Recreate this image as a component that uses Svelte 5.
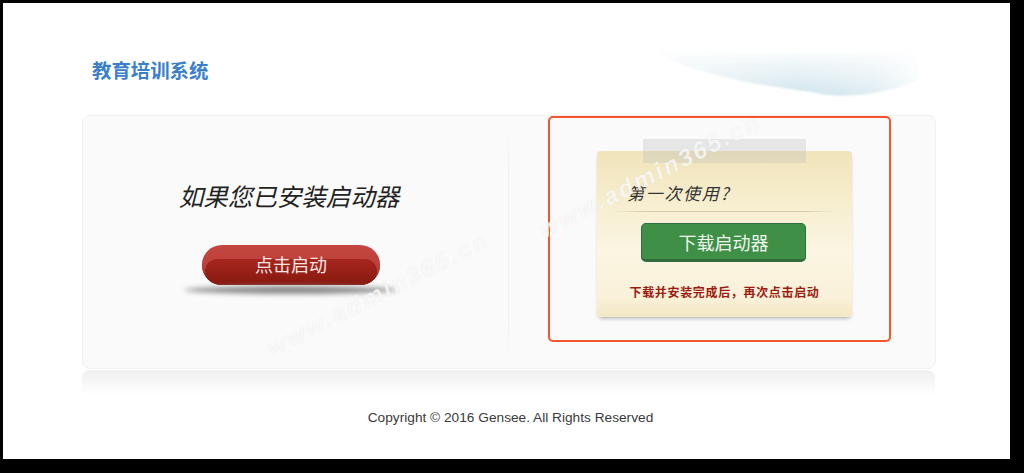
<script>
  // static launcher page, nothing interactive
  const title = '教育培训系统'
  const watermark = 'www.admin365.cn'
</script>

<div class="screen">
  <div class="window">

    <!-- header + swoosh -->
    <header class="top">
      <h1>{title}</h1>
      <svg class="swoosh" viewBox="0 0 300 70" aria-hidden="true">
        <defs>
          <filter id="soft" x="-20%" y="-40%" width="140%" height="180%">
            <feGaussianBlur stdDeviation="1.2" />
          </filter>
          <linearGradient id="wave" gradientUnits="userSpaceOnUse" x1="0" x2="0" y1="8" y2="54">
            <stop offset="0" stop-color="#d4e6ee" stop-opacity="0" />
            <stop offset="0.6" stop-color="#dcebf1" stop-opacity="0.8" />
            <stop offset="1" stop-color="#cfe3ec" />
          </linearGradient>
          <linearGradient id="fade" x1="0" x2="1" y1="0" y2="0">
            <stop offset="0" stop-color="#fff" stop-opacity="0.35" />
            <stop offset="0.55" stop-color="#fff" />
            <stop offset="0.8" stop-color="#fff" stop-opacity="0.7" />
            <stop offset="1" stop-color="#fff" stop-opacity="0" />
          </linearGradient>
          <mask id="ends">
            <rect width="300" height="70" fill="url(#fade)" />
          </mask>
        </defs>
        <g mask="url(#ends)">
          <path d="M26 14 C70 34 120 44 179 51 C205 58 240 56 285 40 L285 8 L26 8 Z" fill="url(#wave)" filter="url(#soft)" />
        </g>
      </svg>
    </header>

    <!-- main panel -->
    <main class="card">
      <section class="left">
        <h2>如果您已安装启动器</h2>
        <div class="start-wrap">
          <button class="start"><span>点击启动</span></button>
          <div class="start-shadow"></div>
        </div>
      </section>

      <section class="right">
        <div class="callout">
          <div class="note">
            <div class="tape"></div>
            <h3>第一次使用?</h3>
            <div class="rule"></div>
            <button class="download">下载启动器</button>
            <p>下载并安装完成后&#xFF0C;再次点击启动</p>
          </div>
        </div>
      </section>
    </main>

    <div class="reflect"></div>

    <footer>Copyright © 2016 Gensee. All Rights Reserved</footer>

    <span class="mark mark--one">{watermark}</span>
    <span class="mark mark--two">{watermark}</span>
  </div>
</div>

<style>
  :global(body) {
    margin: 0;
    background: #000;
  }

  .screen {
    box-sizing: border-box;
    width: 1024px;
    height: 473px;
    padding: 3px 14px 14px 3px;
    background: #000;
    overflow: hidden;
    font-family: "Liberation Sans", "Noto Sans CJK SC", sans-serif;
  }

  .window {
    position: relative;
    height: 456px;
    background: #fff;
    display: flex;
    flex-direction: column;
    overflow: hidden;
  }

  /* header */
  .top {
    height: 112px;
    flex: none;
    box-sizing: border-box;
    padding: 56px 0 0 89px;
  }

  h1 {
    margin: 0;
    font-size: 19.4px;
    line-height: 22px;
    font-weight: 700;
    color: #3a80c9;
    font-family: "Noto Sans CJK SC", sans-serif;
  }

  .swoosh {
    position: absolute;
    left: 630px;
    top: 38px;
    width: 300px;
    height: 70px;
  }

  /* card */
  .card {
    flex: none;
    box-sizing: border-box;
    width: 854px;
    height: 254px;
    margin-left: 79px;
    display: flex;
    background: #fafafa;
    border: 1px solid #f0f0f0;
    border-radius: 8px;
    overflow: hidden;
  }

  .left {
    box-sizing: border-box;
    width: 426px;
    flex: none;
    padding: 62px 10px 0 0;
    display: flex;
    flex-direction: column;
    align-items: center;
    /* divider fades out at both ends */
    background: linear-gradient(transparent 5%, #efefef 25%, #efefef 80%, transparent 95%) right / 1px 100% no-repeat;
  }

  h2 {
    margin: 0 4px 0 0;
    font-size: 24.5px;
    line-height: 36px;
    font-weight: 400;
    font-style: italic;
    color: #222;
    font-family: "Noto Sans CJK SC", sans-serif;
  }

  .start-wrap {
    margin-top: 31px;
    display: flex;
    flex-direction: column;
    align-items: center;
  }

  .start {
    position: relative;
    width: 178px;
    height: 40px;
    padding: 0 0 2px;
    border: 0;
    border-radius: 20px;
    overflow: hidden;
    color: #f6e6e2;
    font-size: 18px;
    font-family: "Noto Sans CJK SC", sans-serif;
    background: linear-gradient(#c4463f, #b83a36);
    box-shadow: inset 0 -1px 1px #6e120c;
  }

  /* darker lower lozenge, leaves the gloss wrapping the ends */
  .start::before {
    content: '';
    position: absolute;
    left: 3px;
    right: 3px;
    top: 14px;
    bottom: 0;
    border-radius: 18px 18px 20px 20px;
    background: linear-gradient(#a7261e, #861910);
  }

  .start span {
    position: relative;
  }

  .start-shadow {
    width: 214px;
    height: 8px;
    margin-top: 1px;
    border-radius: 50%;
    background: radial-gradient(ellipse at center, #828282 0, #929292 60%, rgba(170, 170, 170, 0.5) 100%);
    filter: blur(2.5px);
  }

  .right {
    flex: 1;
    padding-left: 39px;
  }

  /* orange annotation */
  .callout {
    box-sizing: border-box;
    width: 343px;
    height: 226px;
    padding: 33px 36px 0 47px;
    border: 2.5px solid #f4552b;
    border-radius: 5px;
  }

  .note {
    position: relative;
    box-sizing: border-box;
    width: 255px;
    height: 166px;
    padding-top: 28px;
    border-radius: 4px;
    display: flex;
    flex-direction: column;
    align-items: center;
    background: linear-gradient(#f0e4b9 0, #f7efd2 35%, #fbf5e2 60%, #f9f1d9 88%, #f3e8c5 100%);
    box-shadow: 0 3px 4px -2px rgba(0, 0, 0, 0.35);
  }

  .tape {
    position: absolute;
    left: 46px;
    top: -12px;
    width: 163px;
    height: 24px;
    background: rgba(190, 190, 190, 0.32);
  }

  h3 {
    align-self: flex-start;
    margin: 0 0 0 30px;
    font-size: 17px;
    line-height: 28px;
    font-weight: 400;
    font-style: italic;
    letter-spacing: 1.7px;
    color: #333;
    font-family: "Noto Sans CJK SC", sans-serif;
  }

  .rule {
    width: 224px;
    height: 1px;
    margin-top: 4px;
    background: linear-gradient(90deg, transparent, #d6c9a8 15%, #d6c9a8 85%, transparent);
  }

  .download {
    width: 165px;
    height: 39px;
    margin: 11px 2px 0 0;
    padding: 0;
    border: 1px solid #2f6d3f;
    border-bottom-width: 3px;
    border-radius: 5px;
    background: #3f8f47;
    color: #eef5ec;
    font-size: 18px;
    font-family: "Noto Sans CJK SC", sans-serif;
  }

  .note p {
    margin: 21px 0 0;
    font-size: 12px;
    line-height: 18px;
    font-weight: 700;
    letter-spacing: 0.67px;
    color: #9c1c12;
    font-family: "Noto Sans CJK SC", sans-serif;
  }

  /* watermark, sits over everything */
  .mark {
    position: absolute;
    font-family: "Liberation Sans", sans-serif;
    font-size: 24px;
    font-weight: 700;
    font-style: italic;
    letter-spacing: 2.6px;
    white-space: nowrap;
    color: rgba(255, 255, 255, 0.8);
    text-shadow: 0 0 1px rgba(0, 0, 0, 0.1);
    transform: rotate(-27deg);
    transform-origin: left bottom;
    pointer-events: none;
  }

  .mark--one {
    left: 272px;
    top: 331px;
  }

  .mark--two {
    left: 544px;
    top: 213px;
  }

  .reflect {
    flex: none;
    width: 853px;
    height: 25px;
    margin: 1px 0 0 79px;
    border-radius: 8px 8px 0 0;
    background: linear-gradient(#efefef, #fff);
  }

  footer {
    margin-top: 14px;
    text-align: center;
    width: 1015px;
    font-size: 13.7px;
    line-height: 18px;
    color: #3a3a3a;
  }
</style>
